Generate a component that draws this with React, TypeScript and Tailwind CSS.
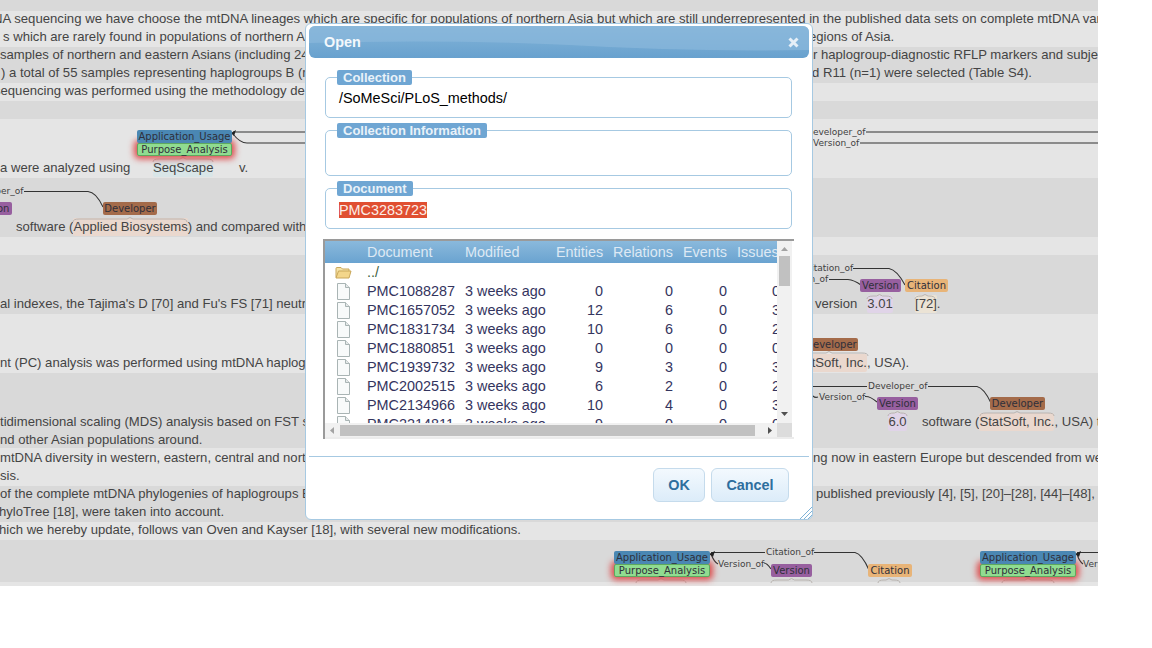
import React from "react";

const LIGHT = "bg-[#e5e5e5]";
const DARK = "bg-[#d9d9d9]";

function Line({ children, className = "" }: { children?: React.ReactNode; className?: string }) {
  return <div className={"flex h-[18px] shrink-0 items-center whitespace-pre pb-[2px] leading-[16px] " + className}>{children}</div>;
}

function Band({ tone, h, children }: { tone: string; h: string; children?: React.ReactNode }) {
  return <div className={"flex flex-col justify-start overflow-hidden " + tone + " " + h}>{children}</div>;
}

function Chip({ cls, label }: { cls: string; label: string }) {
  return (
    <div className={"absolute flex h-[13px] items-center justify-center whitespace-nowrap rounded-[2px] text-[10px] leading-[13px] text-[#2f2f3a] " + cls} style={{ fontFamily: '"DejaVu Sans", sans-serif' }}>
      {label}
    </div>
  );
}

function Rel({ cls, label }: { cls: string; label: string }) {
  return (
    <div className={"absolute whitespace-nowrap text-[9px] leading-[12px] text-[#3f3f3f] " + cls} style={{ fontFamily: '"DejaVu Sans", sans-serif' }}>
      {label}
    </div>
  );
}

function brace(x1: number, x2: number, y: number) {
  const m = (x1 + x2) / 2;
  return `M${x1} ${y + 3} Q${x1} ${y} ${x1 + 6} ${y} L${m - 3} ${y} L${m} ${y - 1.5} L${m + 3} ${y} L${x2 - 6} ${y} Q${x2} ${y} ${x2} ${y + 3}`;
}

const arcs = [
  "M233 132 L806 132 M866 132 L1098 132",
  "M233 134 Q240 143 247 143 L782 143 M860 143 L1098 143",
  "M24 191.5 L88 191.5 Q96 192 103 207",
  "M853 268.5 L889 268.5 Q897 270 905 285",
  "M829 279.5 L848 279.5 Q854 280 861 285",
  "M813 386.5 L867 386.5 M928 386.5 L977 386.5 Q984 388 991 403",
  "M813 396 Q815 398 818 397 M865 396.5 Q870 396 877 402",
  "M711 552.5 L765 552.5 M814 552.5 L855 552.5 Q862 554 869 570",
  "M711 554 Q714 562 718 564 M764 563 Q767 563 771 569",
  "M1077 552.5 L1098 552.5 M1077 554 Q1079 561 1083 564",
];

const braces = [
  [153, 213, 159],
  [73, 187, 219],
  [867, 892, 296],
  [915, 935, 296],
  [790, 868, 353],
  [888, 907, 413],
  [980, 1054, 413],
  [636, 686, 580],
  [771, 812, 580],
  [878, 900, 580],
  [1002, 1054, 580],
];

function Annotations() {
  return (
    <div className="absolute left-0 top-0 h-[586px] w-[1098px] overflow-hidden">
      <svg className="absolute left-0 top-0 h-[586px] w-[1098px]" viewBox="0 0 1098 586" fill="none">
        {arcs.map((d, i) => (
          <path key={i} d={d} stroke="#333333" strokeWidth="1.1" />
        ))}
        {braces.map(([a, b, c], i) => (
          <path key={i} d={brace(a, b, c)} stroke="#b9b4b0" strokeWidth="1" />
        ))}
        <path d="M231 133 L236 130 L234 136 Z" fill="#222222" />
        <path d="M709 554 L715 551 L713 557 Z" fill="#222222" />
        <path d="M1075 554 L1081 551 L1079 557 Z" fill="#222222" />
      </svg>

      <Chip cls="left-[137px] top-[143px] w-[95px] border border-[#5ea85e] bg-[#90dc90] shadow-[0_0_6px_3px_#dd4c4c]" label="Purpose_Analysis" />
      <Chip cls="left-[137px] top-[130px] w-[95px] bg-[#4a87b3]" label="Application_Usage" />
      <Rel cls="left-[806px] top-[126px]" label="Developer_of" />
      <Rel cls="left-[813px] top-[137px]" label="Version_of" />

      <Rel cls="left-[-36px] top-[185px]" label="Developer_of" />
      <Chip cls="left-[-30px] top-[202px] w-[42px] bg-[#975f9f]" label="Version" />
      <Chip cls="left-[103px] top-[202px] w-[54px] bg-[#a46b4a]" label="Developer" />

      <Rel cls="left-[805px] top-[262px]" label="Citation_of" />
      <Rel cls="left-[782px] top-[273px]" label="Version_of" />
      <Chip cls="left-[860px] top-[279px] w-[41px] bg-[#975f9f]" label="Version" />
      <Chip cls="left-[905px] top-[279px] w-[43px] bg-[#e8b478]" label="Citation" />

      <Chip cls="left-[804px] top-[338px] w-[54px] bg-[#a46b4a]" label="Developer" />

      <Rel cls="left-[868px] top-[380px]" label="Developer_of" />
      <Rel cls="left-[819px] top-[391px]" label="Version_of" />
      <Chip cls="left-[877px] top-[397px] w-[41px] bg-[#975f9f]" label="Version" />
      <Chip cls="left-[990px] top-[397px] w-[55px] bg-[#a46b4a]" label="Developer" />

      <Chip cls="left-[614px] top-[564px] w-[96px] border border-[#5ea85e] bg-[#90dc90] shadow-[0_0_6px_3px_#dd4c4c]" label="Purpose_Analysis" />
      <Chip cls="left-[614px] top-[551px] w-[96px] bg-[#4a87b3]" label="Application_Usage" />
      <Rel cls="left-[766px] top-[546px]" label="Citation_of" />
      <Rel cls="left-[718px] top-[558px]" label="Version_of" />
      <Chip cls="left-[771px] top-[564px] w-[41px] bg-[#975f9f]" label="Version" />
      <Chip cls="left-[868px] top-[564px] w-[44px] bg-[#e8b478]" label="Citation" />
      <Chip cls="left-[980px] top-[564px] w-[96px] border border-[#5ea85e] bg-[#90dc90] shadow-[0_0_6px_3px_#dd4c4c]" label="Purpose_Analysis" />
      <Chip cls="left-[980px] top-[551px] w-[96px] bg-[#4a87b3]" label="Application_Usage" />
      <Rel cls="left-[1083px] top-[558px]" label="Version_of" />
    </div>
  );
}

function Article() {
  return (
    <div className="flex h-[586px] w-[1098px] flex-col overflow-hidden text-[13.1px] text-[#444444]">
      <Band tone={DARK} h="h-[11px]" />
      <Band tone={LIGHT} h="h-[36px]">
        <Line className="text-[13.16px]"><span className="ml-[-7px]">NA sequencing we have choose the mtDNA lineages which are specific for populations of northern Asia but which are still underrepresented in the published data sets on complete mtDNA variation</span></Line>
        <Line><span className="w-[809px] shrink-0 overflow-hidden pl-[3px]">s which are rarely found in populations of northern Asia</span><span>egions of Asia.</span></Line>
      </Band>
      <Band tone={DARK} h="h-[36px]">
        <Line><span className="w-[813px] shrink-0 overflow-hidden">samples of northern and eastern Asians (including 24</span><span>r haplogroup-diagnostic RFLP markers and subjected</span></Line>
        <Line><span className="w-[812px] shrink-0 overflow-hidden pl-[1px]">) a total of 55 samples representing haplogroups B (n</span><span>d R11 (n=1) were selected (Table S4).</span></Line>
      </Band>
      <Band tone={LIGHT} h="h-[18px]">
        <Line><span className="ml-[-6px]">sequencing was performed using the methodology de</span></Line>
      </Band>
      <Band tone={DARK} h="h-[18px]" />
      <Band tone={LIGHT} h="h-[59px]">
        <div className="h-[41px] shrink-0" />
        <Line>
          <span className="w-[153px] shrink-0">a were analyzed using</span>
          <span className="w-[60px] shrink-0 rounded-[2px] bg-[#d9e6e8] py-[1px] text-center">SeqScape</span>
          <span className="ml-[26px]">v.</span>
        </Line>
      </Band>
      <Band tone={DARK} h="h-[59px]">
        <div className="h-[41px] shrink-0" />
        <Line>
          <span className="ml-[16px]">software (</span>
          <span className="rounded-[2px] bg-[#ead8ce] py-[1px]">Applied Biosystems</span>
          <span>) and compared with</span>
        </Line>
      </Band>
      <Band tone={LIGHT} h="h-[18px]" />
      <Band tone={DARK} h="h-[59px]">
        <div className="h-[41px] shrink-0" />
        <Line>
          <span className="w-[815px] shrink-0 overflow-hidden">al indexes, the Tajima's D [70] and Fu's FS [71] neutrality</span>
          <span className="w-[52px] shrink-0">version</span>
          <span className="w-[26px] shrink-0 rounded-[2px] bg-[#e0d4e8] py-[1px] text-center">3.01</span>
          <span className="ml-[22px] rounded-[2px] bg-[#ebe3d5] py-[1px]">[72]</span>
          <span>.</span>
        </Line>
      </Band>
      <Band tone={LIGHT} h="h-[59px]">
        <div className="h-[41px] shrink-0" />
        <Line>
          <span className="w-[792px] shrink-0 overflow-hidden">nt (PC) analysis was performed using mtDNA haplogroup</span>
          <span className="rounded-[2px] bg-[#ead8ce] py-[1px]">StatSoft, Inc.</span>
          <span>, USA).</span>
        </Line>
      </Band>
      <Band tone={DARK} h="h-[75px]">
        <div className="h-[41px] shrink-0" />
        <Line>
          <span className="w-[888px] shrink-0 overflow-hidden">tidimensional scaling (MDS) analysis based on FST s</span>
          <span className="w-[19px] shrink-0 rounded-[2px] bg-[#e0d4e8] py-[1px] text-center">6.0</span>
          <span className="ml-[15px]">software (</span>
          <span className="rounded-[2px] bg-[#ead8ce] py-[1px]">StatSoft, Inc.</span>
          <span>, USA) to</span>
        </Line>
        <Line>nd other Asian populations around.</Line>
      </Band>
      <Band tone={LIGHT} h="h-[38px]">
        <div className="h-[2px] shrink-0" />
        <Line>
          <span className="w-[813px] shrink-0 overflow-hidden">mtDNA diversity in western, eastern, central and northern</span>
          <span>ng now in eastern Europe but descended from western</span>
        </Line>
        <Line>sis.</Line>
      </Band>
      <Band tone={DARK} h="h-[36px]">
        <Line>
          <span className="w-[816px] shrink-0 overflow-hidden">of the complete mtDNA phylogenies of haplogroups B</span>
          <span>published previously [4], [5], [20]–[28], [44]–[48],</span>
        </Line>
        <Line><span className="ml-[-1px]">hyloTree [18], were taken into account.</span></Line>
      </Band>
      <Band tone={LIGHT} h="h-[18px]">
        <Line><span className="ml-[-1px]">hich we hereby update, follows van Oven and Kayser [18], with several new modifications.</span></Line>
      </Band>
      <Band tone={DARK} h="h-[42px]" />
      <Band tone={LIGHT} h="h-[4px]" />
    </div>
  );
}

function Field({ legend, h, children }: { legend: string; h: string; children?: React.ReactNode }) {
  return (
    <div className={"relative flex w-[467px] items-center rounded-[5px] border border-[#a6c9e2] pl-[13px] pt-[2px] text-[14.4px] text-black " + h}>
      <span className="absolute left-[11px] top-[-8px] h-[15px] rounded-[2px] bg-[#6fa6d3] px-[6px] text-[13px] font-bold leading-[15px] text-[#e9f2f9]">{legend}</span>
      {children}
    </div>
  );
}

function FolderIcon() {
  return (
    <svg width="17" height="13" viewBox="0 0 17 13" className="ml-[10px]">
      <path d="M1 11.5 V2.5 Q1 1.5 2 1.5 H6 L7.5 3 H14 V5" fill="#f6e3a6" stroke="#c9a75a" />
      <path d="M1 12 L3.5 5 H16 L14 12 Z" fill="#f3d68b" stroke="#c9a75a" />
    </svg>
  );
}

function FileIcon() {
  return (
    <svg width="13" height="17" viewBox="0 0 13 17" className="ml-[12px]">
      <path d="M0.5 0.5 H8.5 L12.5 4.5 V16.5 H0.5 Z" fill="#f8fafa" stroke="#a9b4b4" />
      <path d="M8.5 0.5 V4.5 H12.5" fill="#e4e8e8" stroke="#a9b4b4" />
    </svg>
  );
}

const docs: [string, number, number, number, number][] = [
  ["PMC1088287", 0, 0, 0, 0],
  ["PMC1657052", 12, 6, 0, 3],
  ["PMC1831734", 10, 6, 0, 2],
  ["PMC1880851", 0, 0, 0, 0],
  ["PMC1939732", 9, 3, 0, 3],
  ["PMC2002515", 6, 2, 0, 2],
  ["PMC2134966", 10, 4, 0, 3],
  ["PMC2214811", 9, 0, 0, 0],
];

function Browser() {
  return (
    <div className="ml-[-2px] mt-[10px] flex h-[200px] w-[471px] flex-col border-l-2 border-t-2 border-[#9a9a9a]">
      <div className="flex h-[182px] shrink-0">
        <div className="h-[182px] w-[452px] shrink-0 overflow-hidden">
          <table className="w-[520px] table-fixed border-collapse text-[14.4px] leading-[19px] text-[#34345e]">
            <colgroup>
              <col className="w-[42px]" />
              <col className="w-[98px]" />
              <col className="w-[91px]" />
              <col className="w-[47px]" />
              <col className="w-[70px]" />
              <col className="w-[54px]" />
              <col className="w-[53px]" />
              <col />
            </colgroup>
            <thead>
              <tr className="h-[22px] bg-gradient-to-b from-[#8ab9dc] to-[#6aa3d0] text-left font-normal text-[#dde9f4]">
                <th className="pt-[1px] font-normal" />
                <th className="pt-[1px] font-normal">Document</th>
                <th className="pt-[1px] font-normal">Modified</th>
                <th className="pt-[1px] text-right font-normal">Entities</th>
                <th className="pt-[1px] text-right font-normal">Relations</th>
                <th className="pt-[1px] text-right font-normal">Events</th>
                <th className="pl-[10px] pt-[1px] font-normal">Issues</th>
                <th />
              </tr>
            </thead>
            <tbody>
              <tr className="h-[19px]">
                <td className="p-0 align-middle"><div className="flex h-[19px] items-center"><FolderIcon /></div></td>
                <td className="text-[#3f5f3f]">../</td>
                <td colSpan={6} />
              </tr>
              {docs.map((d) => (
                <tr key={d[0]} className="h-[19px] whitespace-nowrap">
                  <td className="p-0 align-middle"><div className="flex h-[19px] items-center"><FileIcon /></div></td>
                  <td>{d[0]}</td>
                  <td>3 weeks ago</td>
                  <td className="text-right">{d[1]}</td>
                  <td className="text-right">{d[2]}</td>
                  <td className="text-right">{d[3]}</td>
                  <td className="text-right">{d[4]}</td>
                  <td />
                </tr>
              ))}
            </tbody>
          </table>
        </div>
        <div className="flex w-[15px] shrink-0 flex-col items-center bg-[#f1f1f1] pb-[7px] pt-[6px]">
          <svg width="7" height="4" viewBox="0 0 7 4"><path d="M3.5 0 L7 4 H0 Z" fill="#a3a3a3" /></svg>
          <div className="mt-[5px] h-[30px] w-[11px] bg-[#c1c1c1]" />
          <svg width="7" height="4" viewBox="0 0 7 4" className="mt-auto"><path d="M0 0 H7 L3.5 4 Z" fill="#505050" /></svg>
        </div>
      </div>
      <div className="flex h-[14px] w-[467px] shrink-0 items-center bg-[#f1f1f1]">
        <svg width="4" height="7" viewBox="0 0 4 7" className="ml-[5px]"><path d="M4 0 V7 L0 3.5 Z" fill="#a3a3a3" /></svg>
        <div className="ml-[6px] h-[11px] w-[415px] bg-[#c1c1c1]" />
        <svg width="4" height="7" viewBox="0 0 4 7" className="ml-[13px]"><path d="M0 0 L4 3.5 L0 7 Z" fill="#505050" /></svg>
        <div className="ml-auto h-[14px] w-[15px] bg-[#dcdcdc]" />
      </div>
      <div className="h-[2px] w-[469px] bg-[#ececec]" />
    </div>
  );
}

function Dialog() {
  return (
    <div className="absolute left-[305px] top-[23px] z-10 flex h-[497px] w-[508px] flex-col rounded-[6px] border border-[#a6c9e2] bg-white px-[3px] pt-[2px]">
      <div className="relative flex h-[32px] shrink-0 items-center justify-between overflow-hidden rounded-[6px] bg-gradient-to-b from-[#84b5d9] to-[#68a1ce] pl-[15px] pr-[10px] pt-[1px]">
        <svg className="absolute left-0 top-0 h-[32px] w-full" viewBox="0 0 500 32" preserveAspectRatio="none">
          <path d="M0 0 H500 V24 Q380 26 260 19 Q130 13 0 17 Z" fill="#8ab8db" opacity="0.7" />
        </svg>
        <span className="relative text-[14.4px] font-bold text-[#f3f8fc]">Open</span>
        <svg className="relative" width="11" height="11" viewBox="0 0 11 11"><path d="M1.5 1.5 L9.5 9.5 M9.5 1.5 L1.5 9.5" stroke="#e6eff7" strokeWidth="3" /></svg>
      </div>
      <div className="flex flex-col pl-[16px] pt-[19px]">
        <div className="flex flex-col gap-[12px]">
          <Field legend="Collection" h="h-[41px]"><span>/SoMeSci/PLoS_methods/</span></Field>
          <Field legend="Collection Information" h="h-[46px]" />
          <Field legend="Document" h="h-[41px]"><span className="bg-[#e04f31] leading-[16px] text-[#fbeee8]">PMC3283723</span></Field>
        </div>
        <Browser />
      </div>
      <div className="mt-[17px] flex justify-end gap-[6px] border-t border-[#a6c9e2] pr-[20px] pt-[11px]">
        <button className="h-[34px] w-[52px] rounded-[6px] border border-[#c5dbec] bg-gradient-to-b from-[#f3f9fe] to-[#dcecf9] pt-[1px] text-[14.4px] font-bold text-[#2e6e9e]">OK</button>
        <button className="h-[34px] w-[78px] rounded-[6px] border border-[#c5dbec] bg-gradient-to-b from-[#f3f9fe] to-[#dcecf9] pt-[1px] text-[14.4px] font-bold text-[#2e6e9e]">Cancel</button>
      </div>
      <svg className="absolute bottom-0 right-0" width="12" height="12" viewBox="0 0 12 12" fill="none">
        <path d="M0 12 L12 0 M4 12 L12 4 M8 12 L12 8" stroke="#7fb2d6" strokeWidth="1" />
      </svg>
    </div>
  );
}

export default function App() {
  return (
    <div className="relative h-[648px] w-[1152px] overflow-hidden bg-white" style={{ fontFamily: '"Liberation Sans", Arial, sans-serif' }}>
      <Article />
      <Annotations />
      <Dialog />
    </div>
  );
}
